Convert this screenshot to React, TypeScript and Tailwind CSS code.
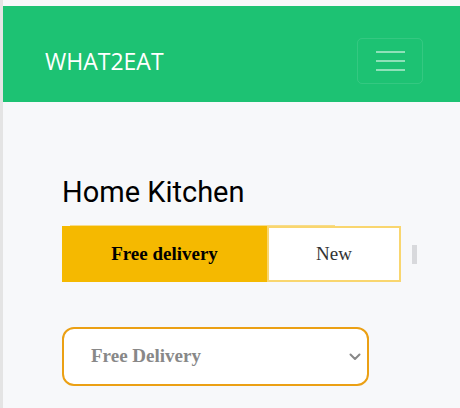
import React from "react";

export default function App() {
  return (
    <div className="w-[460px] h-[408px] overflow-hidden bg-[#f7f8fa] pt-[6px] border-l-[3px] border-[#e4e4e4]">
      <nav className="h-[96px] bg-[#1dc273] flex items-center justify-between pl-[42px] pr-[37px] pt-[14px]">
        <span className="text-white text-[23px] leading-none" style={{ fontFamily: '"Open Sans", sans-serif' }}>
          WHAT2EAT
        </span>
        <button className="w-[66px] h-[46px] rounded-[5px] border border-white/10 flex flex-col items-center justify-center gap-[7px]">
          <span className="block w-[29px] h-[2px] bg-white/50" />
          <span className="block w-[29px] h-[2px] bg-white/50" />
          <span className="block w-[29px] h-[2px] bg-white/50" />
        </button>
      </nav>
      <main className="pl-[59px] pt-[76px]">
        <h1 className="text-[29px] leading-none text-black" style={{ fontFamily: 'Roboto, sans-serif' }}>
          Home Kitchen
        </h1>
        <div className="mt-[18px] ml-[8px] w-[265px] h-px bg-[#f7dc8a]" />
        <div className="flex items-center">
          <div
            className="w-[205px] h-[56px] bg-[#f5b900] flex items-center justify-center text-[19px] font-bold text-black"
            style={{ fontFamily: '"Liberation Serif", serif' }}
          >
            Free delivery
          </div>
          <div
            className="w-[134px] h-[56px] bg-white border-2 border-[#f9d66f] flex items-center justify-center text-[19px] text-[#333]"
            style={{ fontFamily: '"Liberation Serif", serif' }}
          >
            New
          </div>
          <div className="ml-[11px] w-[5px] h-[19px] bg-[#d8d9dc]" />
        </div>
        <div className="mt-[45px] w-[307px] h-[59px] rounded-[12px] border-2 border-[#eba014] bg-white flex items-center justify-between pl-[27px] pr-[6px]">
          <span className="text-[19px] font-bold text-[#888]" style={{ fontFamily: '"Liberation Serif", serif' }}>
            Free Delivery
          </span>
          <svg width="12" height="8" viewBox="0 0 12 8" fill="none">
            <path d="M1.5 1.5 L6 6 L10.5 1.5" stroke="#888" strokeWidth="2" strokeLinecap="round" strokeLinejoin="round" />
          </svg>
        </div>
      </main>
    </div>
  );
}
